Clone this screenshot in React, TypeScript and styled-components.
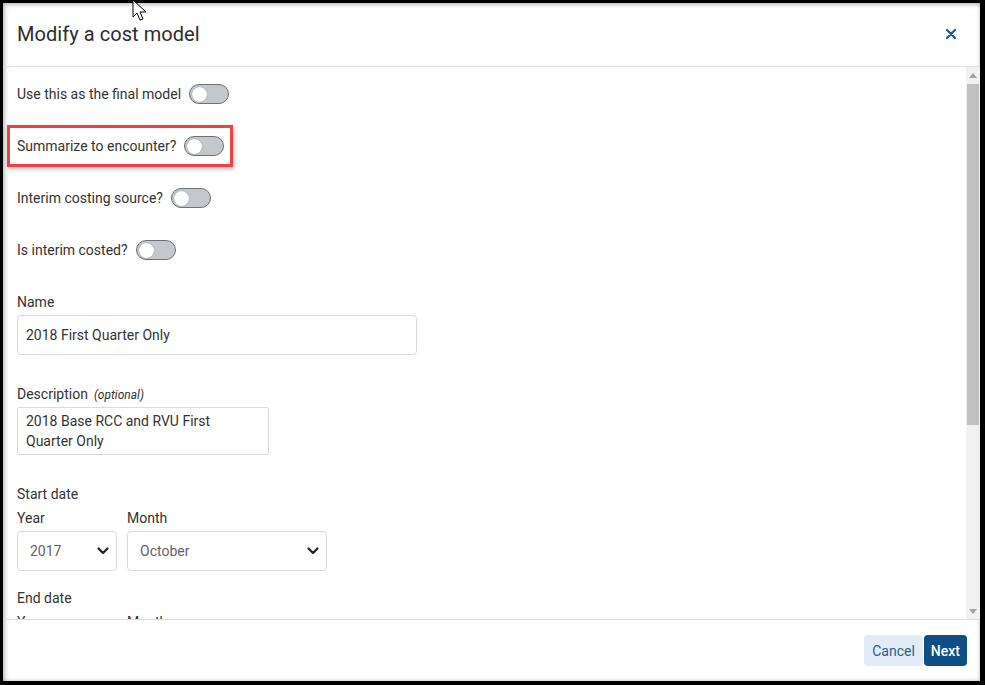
import React from "react";
import styled, { createGlobalStyle } from "styled-components";

const Global = createGlobalStyle`
  html, body { margin: 0; padding: 0; background: #000; }
  * { box-sizing: border-box; }
  body { font-family: Roboto, "Liberation Sans", Arial, sans-serif; }
`;

const Frame = styled.div`
  width: 985px;
  height: 685px;
  padding: 3px 5px 4px 3px;
  background: #000;
  position: relative;
`;

const Dialog = styled.div`
  width: 100%;
  height: 100%;
  background: #fff;
  display: flex;
  flex-direction: column;
  box-shadow: inset 3px 3px 5px -2px rgba(0, 0, 0, 0.35), inset -2px -2px 4px -2px rgba(0, 0, 0, 0.25);
`;

const Header = styled.div`
  height: 64px;
  flex: none;
  display: flex;
  align-items: center;
  justify-content: space-between;
  padding: 0 24px 2px 14px;
  border-bottom: 1px solid #e2e1ea;
`;

const Title = styled.h1`
  margin: 0;
  font-size: 20px;
  font-weight: 400;
  color: #2b2d30;
  letter-spacing: 0.05px;
`;

const CloseButton = styled.button`
  border: 0;
  background: none;
  padding: 0;
  width: 10px;
  height: 10px;
  display: flex;
  cursor: pointer;
`;

const Body = styled.div`
  flex: 1;
  min-height: 0;
  display: flex;
`;

const Content = styled.div`
  flex: 1;
  overflow: hidden;
  padding: 17px 0 0 14px;
  display: flex;
  flex-direction: column;
`;

const ScrollTrack = styled.div`
  width: 14px;
  flex: none;
  background: #f1f1f1;
  display: flex;
  flex-direction: column;
  align-items: center;
`;

const ScrollArrow = styled.div<{ $down?: boolean }>`
  height: 16px;
  width: 100%;
  display: flex;
  align-items: center;
  justify-content: center;
  svg { transform: ${(p) => (p.$down ? "rotate(180deg)" : "none")}; }
`;

const ScrollThumb = styled.div`
  width: 12px;
  height: 341px;
  margin-top: 1px;
  background: #c1c1c1;
`;

const ScrollSpacer = styled.div`
  flex: 1;
`;

const ToggleRow = styled.div`
  position: relative;
  height: 20px;
  display: flex;
  align-items: center;
  gap: 8px;
  margin-bottom: 32px;
  font-size: 14px;
  color: #333;
`;

const Highlight = styled.div`
  position: absolute;
  left: -10px;
  top: -11px;
  width: 226px;
  height: 42px;
  border: 3px solid #ec4147;
  box-shadow: 1px 2px 4px rgba(0, 0, 0, 0.3);
  pointer-events: none;
`;

const Toggle = styled.span`
  width: 40px;
  height: 20px;
  border-radius: 10px;
  border: 1px solid #6c7178;
  background: #c4c7cc;
  display: flex;
  align-items: center;
  padding-left: 2px;
  &::after {
    content: "";
    width: 15px;
    height: 15px;
    border-radius: 50%;
    background: #fff;
    box-shadow: 0 0 1px rgba(0, 0, 0, 0.4);
  }
`;

const Label = styled.div`
  font-size: 14px;
  line-height: 20px;
  height: 20px;
  color: #333;
  white-space: nowrap;
`;

const Optional = styled.span`
  font-size: 12px;
  line-height: 12px;
  font-style: italic;
  margin-left: 6px;
  color: #333;
`;

const Field = styled.div<{ $mb?: number }>`
  display: flex;
  flex-direction: column;
  gap: 3px;
  margin-bottom: ${(p) => p.$mb ?? 29}px;
`;

const TextInput = styled.div<{ $w: number }>`
  width: ${(p) => p.$w}px;
  height: 40px;
  border: 1px solid #d9dadd;
  border-radius: 4px;
  padding: 0 8px;
  display: flex;
  align-items: center;
  font-size: 14px;
  color: #333;
`;

const TextArea = styled.div`
  width: 252px;
  height: 48px;
  border: 1px solid #d9dadd;
  border-radius: 2px;
  padding: 3px 8px;
  font-size: 14px;
  line-height: 20px;
  color: #333;
`;

const DateRow = styled.div`
  display: flex;
  gap: 10px;
  margin-top: 4px;
  margin-bottom: 17px;
`;

const DateCol = styled.div<{ $w: number }>`
  width: ${(p) => p.$w}px;
  display: flex;
  flex-direction: column;
  gap: 3px;
`;

const Select = styled.div`
  width: 100%;
  height: 40px;
  border: 1px solid #d9dadd;
  border-radius: 4px;
  padding: 0 7px 0 12px;
  display: flex;
  align-items: center;
  justify-content: space-between;
  font-size: 14px;
  color: #5f6368;
`;

const Footer = styled.div`
  height: 62px;
  flex: none;
  border-top: 1px solid #dedede;
  display: flex;
  align-items: center;
  justify-content: flex-end;
  gap: 1px;
  padding: 0 13px 0 0;
`;

const Button = styled.button<{ $primary?: boolean }>`
  height: 31px;
  padding: 0 ${(p) => (p.$primary ? 7 : 8)}px;
  border: 0;
  border-radius: 4px;
  font-family: Roboto, "Liberation Sans", Arial, sans-serif;
  font-size: 14px;
  font-weight: ${(p) => (p.$primary ? 500 : 400)};
  background: ${(p) => (p.$primary ? "#0f4d85" : "#e1ecf8")};
  color: ${(p) => (p.$primary ? "#fff" : "#2d5d8e")};
`;

const Cursor = styled.svg`
  position: absolute;
  left: 132px;
  top: 0;
`;

const Chevron = () => (
  <svg width="12" height="8" viewBox="0 0 12 8">
    <path d="M1.5 1.5 L6 6 L10.5 1.5" fill="none" stroke="#222" strokeWidth="2.2" strokeLinecap="round" strokeLinejoin="round" />
  </svg>
);

const Arrow = () => (
  <svg width="8" height="5" viewBox="0 0 8 5">
    <path d="M0 5 L4 0 L8 5 Z" fill="#a3a3a3" />
  </svg>
);

export default function App() {
  return (
    <>
      <Global />
      <Frame>
        <Dialog>
          <Header>
            <Title>Modify a cost model</Title>
            <CloseButton aria-label="Close">
              <svg width="10" height="10" viewBox="0 0 10 10">
                <path d="M1 1 L9 9 M9 1 L1 9" stroke="#1d5a98" strokeWidth="2.2" strokeLinecap="round" />
              </svg>
            </CloseButton>
          </Header>
          <Body>
            <Content>
              <ToggleRow>
                Use this as the final model
                <Toggle />
              </ToggleRow>
              <ToggleRow>
                <Highlight />
                Summarize to encounter?
                <Toggle />
              </ToggleRow>
              <ToggleRow>
                Interim costing source?
                <Toggle />
              </ToggleRow>
              <ToggleRow>
                Is interim costed?
                <Toggle />
              </ToggleRow>
              <Field>
                <Label>Name</Label>
                <TextInput $w={400}>2018 First Quarter Only</TextInput>
              </Field>
              <Field>
                <Label>
                  Description<Optional>(optional)</Optional>
                </Label>
                <TextArea>2018 Base RCC and RVU First Quarter Only</TextArea>
              </Field>
              <Label>Start date</Label>
              <DateRow>
                <DateCol $w={100}>
                  <Label>Year</Label>
                  <Select>
                    2017
                    <Chevron />
                  </Select>
                </DateCol>
                <DateCol $w={200}>
                  <Label>Month</Label>
                  <Select>
                    October
                    <Chevron />
                  </Select>
                </DateCol>
              </DateRow>
              <Label>End date</Label>
              <DateRow>
                <DateCol $w={100}>
                  <Label>Year</Label>
                </DateCol>
                <DateCol $w={200}>
                  <Label>Month</Label>
                </DateCol>
              </DateRow>
            </Content>
            <ScrollTrack>
              <ScrollArrow>
                <Arrow />
              </ScrollArrow>
              <ScrollThumb />
              <ScrollSpacer />
              <ScrollArrow $down>
                <Arrow />
              </ScrollArrow>
            </ScrollTrack>
          </Body>
          <Footer>
            <Button>Cancel</Button>
            <Button $primary>Next</Button>
          </Footer>
        </Dialog>
        <Cursor width="18" height="24" viewBox="0 0 18 24">
          <path d="M1 0 L1 17 L5 13 L8 20 L11 19 L8 12 L14 12 Z" fill="#fff" stroke="#000" strokeWidth="1" />
        </Cursor>
      </Frame>
    </>
  );
}
